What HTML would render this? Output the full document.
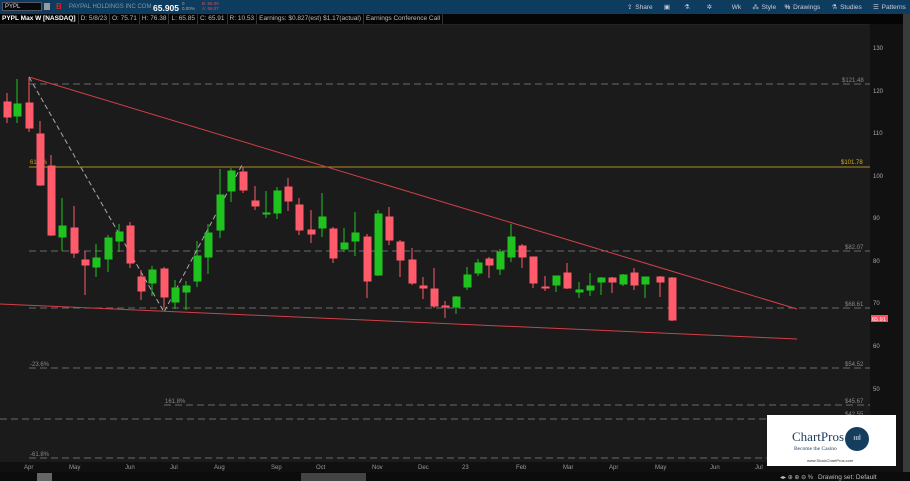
<!DOCTYPE html>
<html><head><meta charset="utf-8"><style>
*{margin:0;padding:0;box-sizing:border-box}
body{width:910px;height:481px;overflow:hidden;background:#1b1b1b;font-family:"Liberation Sans",sans-serif;position:relative}
.top{position:absolute;left:0;top:0;width:910px;height:14px;background:#0d3c5e;color:#9fb6c8;font-size:7px}
.row2{position:absolute;left:0;top:14px;width:910px;height:10px;background:#050505;font-size:6.5px;color:#bbb}
.row2 span{display:inline-block;border-right:1px solid #333;padding:0 2px;line-height:10px}
svg{position:absolute;left:0;top:0}
.ax{position:absolute;left:870px;top:24px;width:33px;height:448px;background:#111}
.strip{position:absolute;left:903px;top:14px;width:7px;height:467px;background:#3a3a3a}
.logo{position:absolute;left:767px;top:415px;width:129px;height:51px;background:#fff}
.bot{position:absolute;left:0;top:472px;width:910px;height:9px;background:#0e0e0e;color:#aaa;font-size:7px}
</style></head><body>
<div class="top">
 <div style="position:absolute;left:2px;top:2px;width:40px;height:9px;background:#08090b;border:1px solid #556;color:#ddd;font-size:6px;padding-left:2px;line-height:8px">PYPL</div>
 <div style="position:absolute;left:44px;top:3px;width:6px;height:7px;background:#999"></div>
 <div style="position:absolute;left:56px;top:2px;color:#e02020;font-weight:bold;font-size:8px">B</div>
 <div style="position:absolute;left:69px;top:4px;font-size:6px;color:#7d98ad">PAYPAL HOLDINGS INC COM</div>
 <div style="position:absolute;left:153px;top:3px;font-size:8.5px;color:#fff;font-weight:bold">65.905</div>
 <div style="position:absolute;left:182px;top:1px;font-size:4.5px;color:#aaa;line-height:5px">0<br>0.00%</div>
 <div style="position:absolute;left:202px;top:1px;font-size:4.5px;color:#d05060;line-height:5px">B: 66.00<br>A: 66.07</div>
 <div style="position:absolute;left:627px;top:3px;color:#ccd;font-size:6.5px;white-space:nowrap;word-spacing:1px">⇪ Share &nbsp;&nbsp; ▣ &nbsp;&nbsp;&nbsp; ⚗ &nbsp;&nbsp;&nbsp;&nbsp; ✲ &nbsp;&nbsp;&nbsp;&nbsp;&nbsp; Wk &nbsp;&nbsp; ⁂ Style &nbsp;&nbsp;<b>%</b> Drawings &nbsp;&nbsp; ⚗ Studies &nbsp;&nbsp; ☰ Patterns &nbsp;&nbsp; ≡</div>
</div>
<div class="row2"><span style="font-weight:bold;color:#fff">PYPL Max W [NASDAQ]</span><span>D: 5/8/23</span><span>O: 75.71</span><span>H: 76.38</span><span>L: 65.85</span><span>C: 65.91</span><span>R: 10.53</span><span>Earnings: $0.827(est) $1.17(actual)</span><span>Earnings Conference Call</span></div>
<div class="ax"></div>
<div class="strip"></div>
<svg width="910" height="481" font-family="Liberation Sans" font-size="6">
<g stroke="#6a6a6a" stroke-width="1" stroke-dasharray="7,4">
<line x1="29" y1="84" x2="870" y2="84"/>
<line x1="29" y1="251" x2="870" y2="251"/>
<line x1="29" y1="308" x2="870" y2="308"/>
<line x1="29" y1="368" x2="870" y2="368"/>
<line x1="164" y1="405" x2="870" y2="405"/>
<line x1="0" y1="419" x2="870" y2="419"/>
<line x1="29" y1="458" x2="870" y2="458"/>
</g>
<g fill="#888"><text x="842" y="82">$121.48</text><text x="845" y="249">$82.07</text><text x="845" y="306">$68.61</text><text x="845" y="366">$54.52</text><text x="845" y="403">$45.67</text><text x="845" y="416">$42.55</text>
<text x="30" y="366">-23.6%</text><text x="165" y="403">161.8%</text><text x="30" y="456">-61.8%</text></g>
<line x1="29" y1="167" x2="870" y2="167" stroke="#a89020" stroke-width="1"/>
<text x="30" y="164" fill="#c9a020">61.8%</text><text x="841" y="164" fill="#d4b020">$101.78</text>
<g fill="#aaa"><text x="873" y="50">130</text><text x="873" y="93">120</text><text x="873" y="135">110</text><text x="873" y="178">100</text><text x="873" y="220">90</text><text x="873" y="263">80</text><text x="873" y="305">70</text><text x="873" y="348">60</text><text x="873" y="391">50</text><text x="873" y="433">40</text></g>
<rect x="871" y="315" width="17" height="7" fill="#ff5060"/><text x="872" y="321" fill="#fff" font-size="5.5">65.91</text>
<polyline points="29,77 164,312 243,163" fill="none" stroke="#aaa" stroke-dasharray="5,3"/>
<line x1="29" y1="77" x2="797" y2="309" stroke="#d04048"/>
<line x1="0" y1="304" x2="797" y2="339" stroke="#d04048"/>
<g id="c"></g>
<g stroke-width="1">
<g stroke="#ff5b6b" fill="#ff5b6b">
<line x1="7" y1="93" x2="7" y2="123"/><rect x="4" y="102" width="7" height="15"/>
<line x1="29" y1="77" x2="29" y2="132"/><rect x="26" y="103" width="7" height="25"/>
<line x1="40" y1="121" x2="40" y2="186"/><rect x="37" y="134" width="7" height="51"/>
<line x1="51" y1="155" x2="51" y2="236"/><rect x="48" y="166" width="7" height="69"/>
<line x1="74" y1="206" x2="74" y2="258"/><rect x="71" y="228" width="7" height="25"/>
<line x1="85" y1="251" x2="85" y2="295"/><rect x="82" y="260" width="7" height="5"/>
<line x1="130" y1="222" x2="130" y2="268"/><rect x="127" y="226" width="7" height="37"/>
<line x1="141" y1="270" x2="141" y2="300"/><rect x="138" y="277" width="7" height="14"/>
<line x1="164" y1="267" x2="164" y2="307"/><rect x="161" y="269" width="7" height="28"/>
<line x1="243" y1="167" x2="243" y2="193"/><rect x="240" y="172" width="7" height="18"/>
<line x1="255" y1="186" x2="255" y2="210"/><rect x="252" y="201" width="7" height="5"/>
<line x1="288" y1="178" x2="288" y2="211"/><rect x="285" y="187" width="7" height="14"/>
<line x1="299" y1="198" x2="299" y2="235"/><rect x="296" y="205" width="7" height="25"/>
<line x1="311" y1="210" x2="311" y2="243"/><rect x="308" y="230" width="7" height="4"/>
<line x1="333" y1="227" x2="333" y2="263"/><rect x="330" y="229" width="7" height="29"/>
<line x1="367" y1="234" x2="367" y2="298"/><rect x="364" y="237" width="7" height="44"/>
<line x1="389" y1="207" x2="389" y2="245"/><rect x="386" y="217" width="7" height="23"/>
<line x1="400" y1="240" x2="400" y2="277"/><rect x="397" y="242" width="7" height="18"/>
<line x1="412" y1="248" x2="412" y2="285"/><rect x="409" y="260" width="7" height="23"/>
<line x1="423" y1="277" x2="423" y2="299"/><rect x="420" y="286" width="7" height="2"/>
<line x1="434" y1="268" x2="434" y2="308"/><rect x="431" y="289" width="7" height="17"/>
<line x1="445" y1="301" x2="445" y2="318"/><rect x="442" y="306" width="7" height="1"/>
<line x1="489" y1="257" x2="489" y2="278"/><rect x="486" y="259" width="7" height="6"/>
<line x1="522" y1="244" x2="522" y2="268"/><rect x="519" y="246" width="7" height="11"/>
<line x1="533" y1="257" x2="533" y2="288"/><rect x="530" y="257" width="7" height="26"/>
<line x1="545" y1="276" x2="545" y2="291"/><rect x="542" y="287" width="7" height="1"/>
<line x1="567" y1="263" x2="567" y2="289"/><rect x="564" y="273" width="7" height="15"/>
<line x1="612" y1="277" x2="612" y2="293"/><rect x="609" y="278" width="7" height="4"/>
<line x1="634" y1="268" x2="634" y2="290"/><rect x="631" y="273" width="7" height="12"/>
<line x1="660" y1="276" x2="660" y2="297"/><rect x="657" y="277" width="7" height="5"/>
<line x1="672" y1="277" x2="672" y2="321"/><rect x="669" y="278" width="7" height="42"/>
</g>
<g stroke="#1fc21f" fill="#1fc21f">
<line x1="17" y1="79" x2="17" y2="123"/><rect x="14" y="104" width="7" height="12"/>
<line x1="62" y1="198" x2="62" y2="251"/><rect x="59" y="226" width="7" height="11"/>
<line x1="96" y1="244" x2="96" y2="277"/><rect x="93" y="258" width="7" height="9"/>
<line x1="108" y1="235" x2="108" y2="272"/><rect x="105" y="238" width="7" height="21"/>
<line x1="119" y1="224" x2="119" y2="252"/><rect x="116" y="232" width="7" height="9"/>
<line x1="152" y1="266" x2="152" y2="296"/><rect x="149" y="270" width="7" height="13"/>
<line x1="175" y1="280" x2="175" y2="309"/><rect x="172" y="288" width="7" height="14"/>
<line x1="186" y1="281" x2="186" y2="310"/><rect x="183" y="286" width="7" height="6"/>
<line x1="197" y1="241" x2="197" y2="287"/><rect x="194" y="256" width="7" height="25"/>
<line x1="208" y1="224" x2="208" y2="274"/><rect x="205" y="233" width="7" height="24"/>
<line x1="220" y1="169" x2="220" y2="238"/><rect x="217" y="195" width="7" height="35"/>
<line x1="231" y1="168" x2="231" y2="202"/><rect x="228" y="171" width="7" height="20"/>
<line x1="266" y1="191" x2="266" y2="218"/><rect x="263" y="213" width="7" height="1"/>
<line x1="277" y1="187" x2="277" y2="219"/><rect x="274" y="191" width="7" height="22"/>
<line x1="322" y1="193" x2="322" y2="237"/><rect x="319" y="217" width="7" height="11"/>
<line x1="344" y1="228" x2="344" y2="252"/><rect x="341" y="243" width="7" height="6"/>
<line x1="355" y1="212" x2="355" y2="256"/><rect x="352" y="233" width="7" height="8"/>
<line x1="378" y1="210" x2="378" y2="276"/><rect x="375" y="214" width="7" height="61"/>
<line x1="456" y1="296" x2="456" y2="314"/><rect x="453" y="297" width="7" height="10"/>
<line x1="467" y1="267" x2="467" y2="290"/><rect x="464" y="275" width="7" height="12"/>
<line x1="478" y1="259" x2="478" y2="276"/><rect x="475" y="263" width="7" height="10"/>
<line x1="500" y1="249" x2="500" y2="275"/><rect x="497" y="252" width="7" height="17"/>
<line x1="511" y1="224" x2="511" y2="262"/><rect x="508" y="237" width="7" height="20"/>
<line x1="556" y1="276" x2="556" y2="292"/><rect x="553" y="276" width="7" height="9"/>
<line x1="579" y1="282" x2="579" y2="298"/><rect x="576" y="290" width="7" height="2"/>
<line x1="590" y1="273" x2="590" y2="296"/><rect x="587" y="286" width="7" height="4"/>
<line x1="601" y1="277" x2="601" y2="295"/><rect x="598" y="278" width="7" height="4"/>
<line x1="623" y1="274" x2="623" y2="286"/><rect x="620" y="275" width="7" height="9"/>
<line x1="645" y1="277" x2="645" y2="298"/><rect x="642" y="277" width="7" height="7"/>
</g>
</g>
<rect x="0" y="462" width="870" height="10" fill="#101010"/>
<g fill="#999" font-size="6"><text x="24" y="469">Apr</text><text x="69" y="469">May</text><text x="125" y="469">Jun</text><text x="170" y="469">Jul</text><text x="214" y="469">Aug</text><text x="271" y="469">Sep</text><text x="316" y="469">Oct</text><text x="372" y="469">Nov</text><text x="418" y="469">Dec</text><text x="462" y="469">23</text><text x="516" y="469">Feb</text><text x="563" y="469">Mar</text><text x="609" y="469">Apr</text><text x="655" y="469">May</text><text x="710" y="469">Jun</text><text x="755" y="469">Jul</text></g>
<rect x="0" y="472" width="910" height="9" fill="#0c0c0c"/>
<rect x="37" y="473" width="15" height="8" fill="#666"/>
<rect x="301" y="473" width="65" height="8" fill="#444"/>
<text x="780" y="479" fill="#bbb" font-size="6">◂▸ ⊕ ⊕ ⊖ %</text>
<text x="818" y="479" fill="#bbb" font-size="6.5">Drawing set: Default</text>
<rect x="0" y="24" width="870" height="1" fill="#222"/>
</svg>
<div class="logo">
 <div style="position:absolute;left:25px;top:14px;font-family:'Liberation Serif',serif;font-size:13px;color:#1b3a5c">ChartPros</div>
 <div style="position:absolute;left:27px;top:31px;font-family:'Liberation Serif',serif;font-size:5.5px;color:#1b3a5c">Become the Casino</div>
 <div style="position:absolute;left:78px;top:12px;width:24px;height:24px;border-radius:50%;background:#143d5e;color:#fff;font-size:7px;text-align:center;line-height:24px">ıııl</div>
 <div style="position:absolute;left:40px;top:43px;font-size:4px;color:#333">www.StockChartPros.com</div>
</div>
</body></html>
